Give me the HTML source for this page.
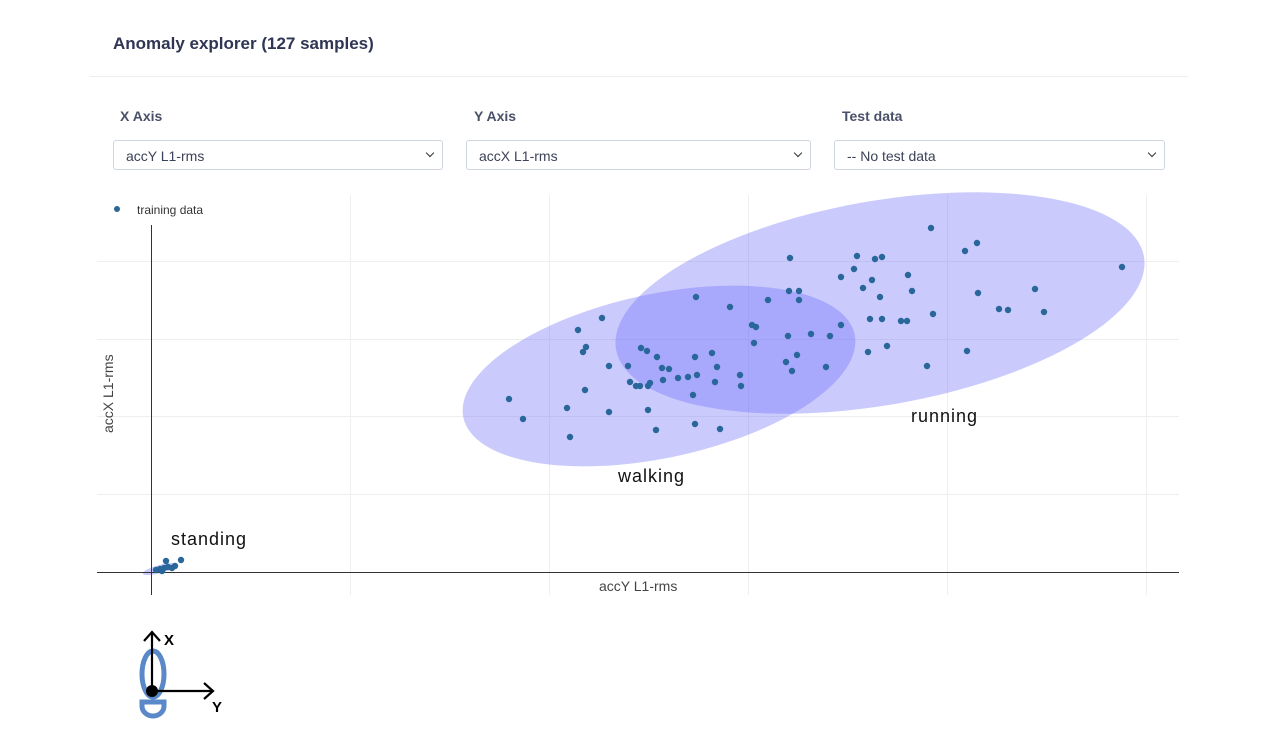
<!DOCTYPE html>
<html><head><meta charset="utf-8"><style>
body{margin:0;width:1280px;height:740px;background:#fff;font-family:"Liberation Sans",sans-serif;position:relative;overflow:hidden}
.t{position:absolute;left:113px;top:34px;font-size:17px;font-weight:bold;color:#2f3553}
.hr{position:absolute;left:90px;width:1098px;top:76px;height:1px;background:#eceef2}
.l{position:absolute;top:108px;font-size:14px;font-weight:bold;color:#4a5068}
.s{position:absolute;top:140px;height:30px;border:1px solid #cfd6e0;border-radius:3px;box-sizing:border-box;font-size:14px;color:#3c4257;padding:7px 12px}
.s:after{content:"";position:absolute;right:9px;top:9px;width:5px;height:5px;border-right:1.5px solid #333;border-bottom:1.5px solid #333;transform:rotate(45deg)}
</style></head><body>
<div class="t">Anomaly explorer (127 samples)</div>
<div class="hr"></div>
<div class="l" style="left:120px">X Axis</div>
<div class="l" style="left:474px">Y Axis</div>
<div class="l" style="left:842px">Test data</div>
<div class="s" style="left:113px;width:330px">accY L1-rms</div>
<div class="s" style="left:466px;width:345px">accX L1-rms</div>
<div class="s" style="left:834px;width:331px">-- No test data</div>
<svg width="1280" height="740" style="position:absolute;left:0;top:0">
<g stroke="#eeeeee" stroke-width="1">
<line x1="350.5" y1="195" x2="350.5" y2="595"/><line x1="549.5" y1="195" x2="549.5" y2="595"/><line x1="748.5" y1="195" x2="748.5" y2="595"/><line x1="947.5" y1="195" x2="947.5" y2="595"/><line x1="1146.5" y1="195" x2="1146.5" y2="595"/>
<line x1="97" y1="261.5" x2="1179" y2="261.5"/><line x1="97" y1="339.5" x2="1179" y2="339.5"/><line x1="97" y1="416.5" x2="1179" y2="416.5"/><line x1="97" y1="494.5" x2="1179" y2="494.5"/>
</g>
<g fill="rgb(110,110,250)" fill-opacity="0.37">
<ellipse cx="659" cy="376" rx="200" ry="82" transform="rotate(-12 659 376)"/>
<ellipse cx="880" cy="303" rx="268" ry="102" transform="rotate(-10 880 303)"/>
<ellipse cx="160" cy="569" rx="18" ry="4" transform="rotate(-15 160 569)"/>
</g>
<line x1="97" y1="572.5" x2="1179" y2="572.5" stroke="#333"/>
<line x1="151.5" y1="225" x2="151.5" y2="595" stroke="#333"/>
<g fill="#29679a">
<circle cx="117" cy="209" r="3"/>
<circle cx="931" cy="228" r="3.2"/><circle cx="965" cy="251" r="3.2"/><circle cx="977" cy="243" r="3.2"/><circle cx="1122" cy="267" r="3.2"/>
<circle cx="790" cy="258" r="3.2"/><circle cx="857" cy="256" r="3.2"/><circle cx="875" cy="259" r="3.2"/><circle cx="882" cy="257" r="3.2"/><circle cx="854" cy="269" r="3.2"/><circle cx="841" cy="277" r="3.2"/><circle cx="872" cy="280" r="3.2"/><circle cx="908" cy="275" r="3.2"/><circle cx="863" cy="288" r="3.2"/><circle cx="880" cy="297" r="3.2"/><circle cx="912" cy="291" r="3.2"/><circle cx="978" cy="293" r="3.2"/><circle cx="1035" cy="289" r="3.2"/><circle cx="999" cy="309" r="3.2"/><circle cx="1008" cy="310" r="3.2"/><circle cx="1044" cy="312" r="3.2"/><circle cx="933" cy="314" r="3.2"/><circle cx="870" cy="319" r="3.2"/><circle cx="882" cy="319" r="3.2"/><circle cx="901" cy="321" r="3.2"/><circle cx="907" cy="321" r="3.2"/><circle cx="887" cy="346" r="3.2"/><circle cx="868" cy="352" r="3.2"/><circle cx="967" cy="351" r="3.2"/><circle cx="927" cy="366" r="3.2"/>
<circle cx="696" cy="297" r="3.2"/><circle cx="730" cy="307" r="3.2"/><circle cx="768" cy="300" r="3.2"/><circle cx="789" cy="291" r="3.2"/><circle cx="799" cy="291" r="3.2"/><circle cx="799" cy="300" r="3.2"/><circle cx="602" cy="318" r="3.2"/><circle cx="578" cy="330" r="3.2"/><circle cx="752" cy="325" r="3.2"/><circle cx="756" cy="327" r="3.2"/><circle cx="841" cy="325" r="3.2"/><circle cx="788" cy="336" r="3.2"/><circle cx="811" cy="334" r="3.2"/><circle cx="830" cy="336" r="3.2"/><circle cx="754" cy="343" r="3.2"/><circle cx="586" cy="347" r="3.2"/><circle cx="583" cy="352" r="3.2"/><circle cx="641" cy="348" r="3.2"/><circle cx="647" cy="351" r="3.2"/><circle cx="657" cy="357" r="3.2"/><circle cx="695" cy="357" r="3.2"/><circle cx="712" cy="353" r="3.2"/><circle cx="797" cy="355" r="3.2"/><circle cx="786" cy="362" r="3.2"/><circle cx="609" cy="366" r="3.2"/><circle cx="628" cy="366" r="3.2"/><circle cx="662" cy="368" r="3.2"/><circle cx="669" cy="369" r="3.2"/><circle cx="717" cy="367" r="3.2"/><circle cx="792" cy="371" r="3.2"/><circle cx="826" cy="367" r="3.2"/><circle cx="663" cy="380" r="3.2"/><circle cx="678" cy="378" r="3.2"/><circle cx="688" cy="377" r="3.2"/><circle cx="697" cy="375" r="3.2"/><circle cx="740" cy="375" r="3.2"/><circle cx="630" cy="382" r="3.2"/><circle cx="636" cy="386" r="3.2"/><circle cx="640" cy="386" r="3.2"/><circle cx="648" cy="386" r="3.2"/><circle cx="650" cy="383" r="3.2"/><circle cx="715" cy="382" r="3.2"/><circle cx="741" cy="386" r="3.2"/><circle cx="585" cy="390" r="3.2"/><circle cx="693" cy="395" r="3.2"/><circle cx="509" cy="399" r="3.2"/><circle cx="567" cy="408" r="3.2"/><circle cx="609" cy="412" r="3.2"/><circle cx="648" cy="410" r="3.2"/><circle cx="523" cy="419" r="3.2"/><circle cx="695" cy="424" r="3.2"/><circle cx="720" cy="429" r="3.2"/><circle cx="656" cy="430" r="3.2"/><circle cx="570" cy="437" r="3.2"/>
<circle cx="166" cy="561" r="3.2"/><circle cx="181" cy="560" r="3.2"/><circle cx="156" cy="570" r="3.2"/><circle cx="160" cy="569" r="3.2"/><circle cx="164" cy="568" r="3.2"/><circle cx="168" cy="567" r="3.2"/><circle cx="172" cy="568" r="3.2"/><circle cx="175" cy="566" r="3.2"/><circle cx="162" cy="571" r="3.2"/>
</g>
<text x="137" y="214" font-size="12" fill="#333" font-family="Liberation Sans">training data</text>
<text x="599" y="591" font-size="14" fill="#444" font-family="Liberation Sans">accY L1-rms</text>
<text transform="translate(113 433) rotate(-90)" font-size="14" fill="#444" font-family="Liberation Sans">accX L1-rms</text>
<g font-size="18" fill="#111" font-family="Liberation Sans">
<text x="171" y="545" textLength="75">standing</text><text x="618" y="482" textLength="66">walking</text><text x="911" y="422" textLength="66">running</text></g>
<g fill="none" stroke="#5a88c8" stroke-width="5">
<ellipse cx="153" cy="674" rx="11" ry="23"/>
<path d="M142 702 h22 v4 a11 10 0 0 1 -22 0 z"/>
</g>
<g stroke="#000" stroke-width="2.2" fill="none">
<line x1="152" y1="692" x2="152" y2="633"/><path d="M144 641 L152 632 L160 641"/>
<line x1="152" y1="691" x2="212" y2="691"/><path d="M204 683 L213 691 L204 699"/>
</g>
<circle cx="152" cy="691" r="6" fill="#000"/>
<text x="164" y="645" font-size="15" font-weight="bold" font-family="Liberation Sans">X</text>
<text x="212" y="712" font-size="15" font-weight="bold" font-family="Liberation Sans">Y</text>
</svg>
</body></html>
